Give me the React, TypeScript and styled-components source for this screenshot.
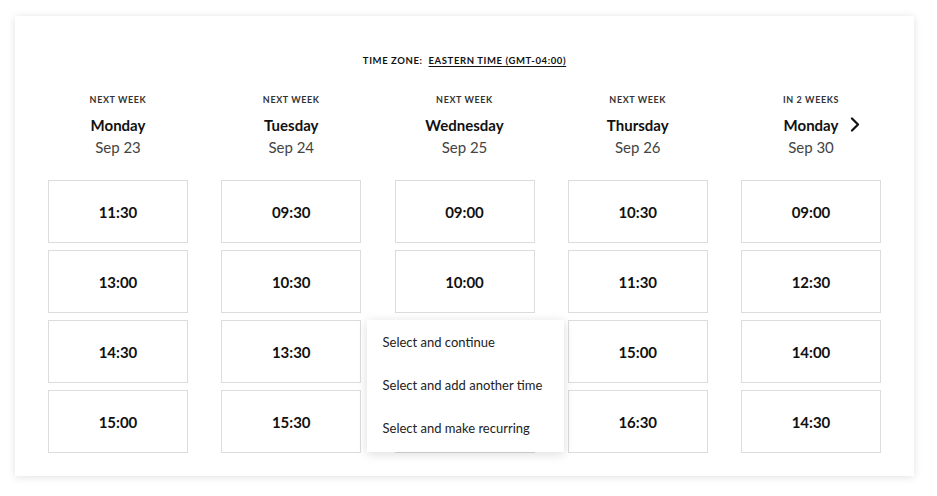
import React from 'react';
import styled, { createGlobalStyle } from 'styled-components';

type Day = { when: string; name: string; date: string; slots: string[] };

const days: Day[] = [
  { when: 'Next week', name: 'Monday', date: 'Sep 23', slots: ['11:30', '13:00', '14:30', '15:00'] },
  { when: 'Next week', name: 'Tuesday', date: 'Sep 24', slots: ['09:30', '10:30', '13:30', '15:30'] },
  { when: 'Next week', name: 'Wednesday', date: 'Sep 25', slots: ['09:00', '10:00', '11:00', '14:00'] },
  { when: 'Next week', name: 'Thursday', date: 'Sep 26', slots: ['10:30', '11:30', '15:00', '16:30'] },
  { when: 'In 2 weeks', name: 'Monday', date: 'Sep 30', slots: ['09:00', '12:30', '14:00', '14:30'] },
];

const menuItems = ['Select and continue', 'Select and add another time', 'Select and make recurring'];

const App = () => {
  return (
    <>
      <GlobalStyle />
      <Page>
        <Card>
          <TimeZone>
            Time zone: <ZoneLink>Eastern Time (GMT-04:00)</ZoneLink>
          </TimeZone>
          <Columns>
            {days.map((day, i) => (
              <Column key={i}>
                <DayHead>
                  <When>{day.when}</When>
                  <DayName>
                    {day.name}
                    {i === days.length - 1 && (
                      <Next>
                        <svg width="10" height="15" viewBox="0 0 10 15" fill="none">
                          <path d="M2 1.5 L8 7.5 L2 13.5" stroke="#111" strokeWidth="2.2" strokeLinecap="round" strokeLinejoin="round" />
                        </svg>
                      </Next>
                    )}
                  </DayName>
                  <DayDate>{day.date}</DayDate>
                </DayHead>
                <Slots>
                  {day.slots.map((slot, j) => (
                    <SlotWrap key={j}>
                      <Slot>{slot}</Slot>
                      {i === 2 && j === 2 && (
                        <Menu>
                          {menuItems.map((item) => (
                            <MenuItem key={item}>{item}</MenuItem>
                          ))}
                        </Menu>
                      )}
                    </SlotWrap>
                  ))}
                </Slots>
              </Column>
            ))}
          </Columns>
        </Card>
      </Page>
    </>
  );
};

export default App;

const GlobalStyle = createGlobalStyle`
  body {
    margin: 0;
    background: #fff;
    font-family: "Lato", "Open Sans", sans-serif;
    color: #111;
  }
`;

const Page = styled.div`
  padding: 16px 23px 20px 15px;
`;

const Card = styled.div`
  width: 899px;
  height: 460px;
  box-sizing: border-box;
  background: #fff;
  box-shadow: 0 1px 8px rgba(0, 0, 0, 0.12);
  padding: 37px 33px 23px;
`;

const TimeZone = styled.div`
  text-align: center;
  font-size: 9.5px;
  font-weight: 700;
  letter-spacing: 0.6px;
  text-transform: uppercase;
  color: #111;
  line-height: 16px;
`;

const ZoneLink = styled.span`
  margin-left: 3px;
  text-decoration: underline;
  text-underline-offset: 2px;
`;

const Columns = styled.div`
  display: grid;
  grid-template-columns: repeat(5, 140px);
  justify-content: space-between;
  margin-top: 24px;
`;

const Column = styled.div`
  display: flex;
  flex-direction: column;
`;

const DayHead = styled.div`
  display: flex;
  flex-direction: column;
  align-items: center;
  height: 87px;
`;

const When = styled.div`
  font-size: 9px;
  font-weight: 700;
  letter-spacing: 0.6px;
  text-transform: uppercase;
  color: #333;
  line-height: 14px;
`;

const DayName = styled.div`
  position: relative;
  margin-top: 8px;
  font-size: 15px;
  font-weight: 700;
  line-height: 20px;
  color: #111;
`;

const Next = styled.span`
  position: absolute;
  left: calc(100% + 12px);
  top: 2px;
  display: flex;
`;

const DayDate = styled.div`
  margin-top: 2px;
  font-size: 15px;
  line-height: 20px;
  color: #444;
`;

const Slots = styled.div`
  display: flex;
  flex-direction: column;
  gap: 7px;
`;

const SlotWrap = styled.div`
  position: relative;
`;

const Slot = styled.div`
  height: 63px;
  box-sizing: border-box;
  border: 1px solid #dcdcdc;
  display: flex;
  align-items: center;
  justify-content: center;
  font-size: 15px;
  font-weight: 700;
  color: #111;
`;

const Menu = styled.div`
  position: absolute;
  top: 0;
  left: -28px;
  width: 197px;
  height: 132px;
  box-sizing: border-box;
  background: #fff;
  box-shadow: 0 2px 10px rgba(0, 0, 0, 0.14);
  display: flex;
  flex-direction: column;
  justify-content: space-around;
  padding: 0 0 2px;
  z-index: 2;
`;

const MenuItem = styled.div`
  padding: 0 16px;
  font-size: 13px;
  line-height: 20px;
  color: #222;
`;
